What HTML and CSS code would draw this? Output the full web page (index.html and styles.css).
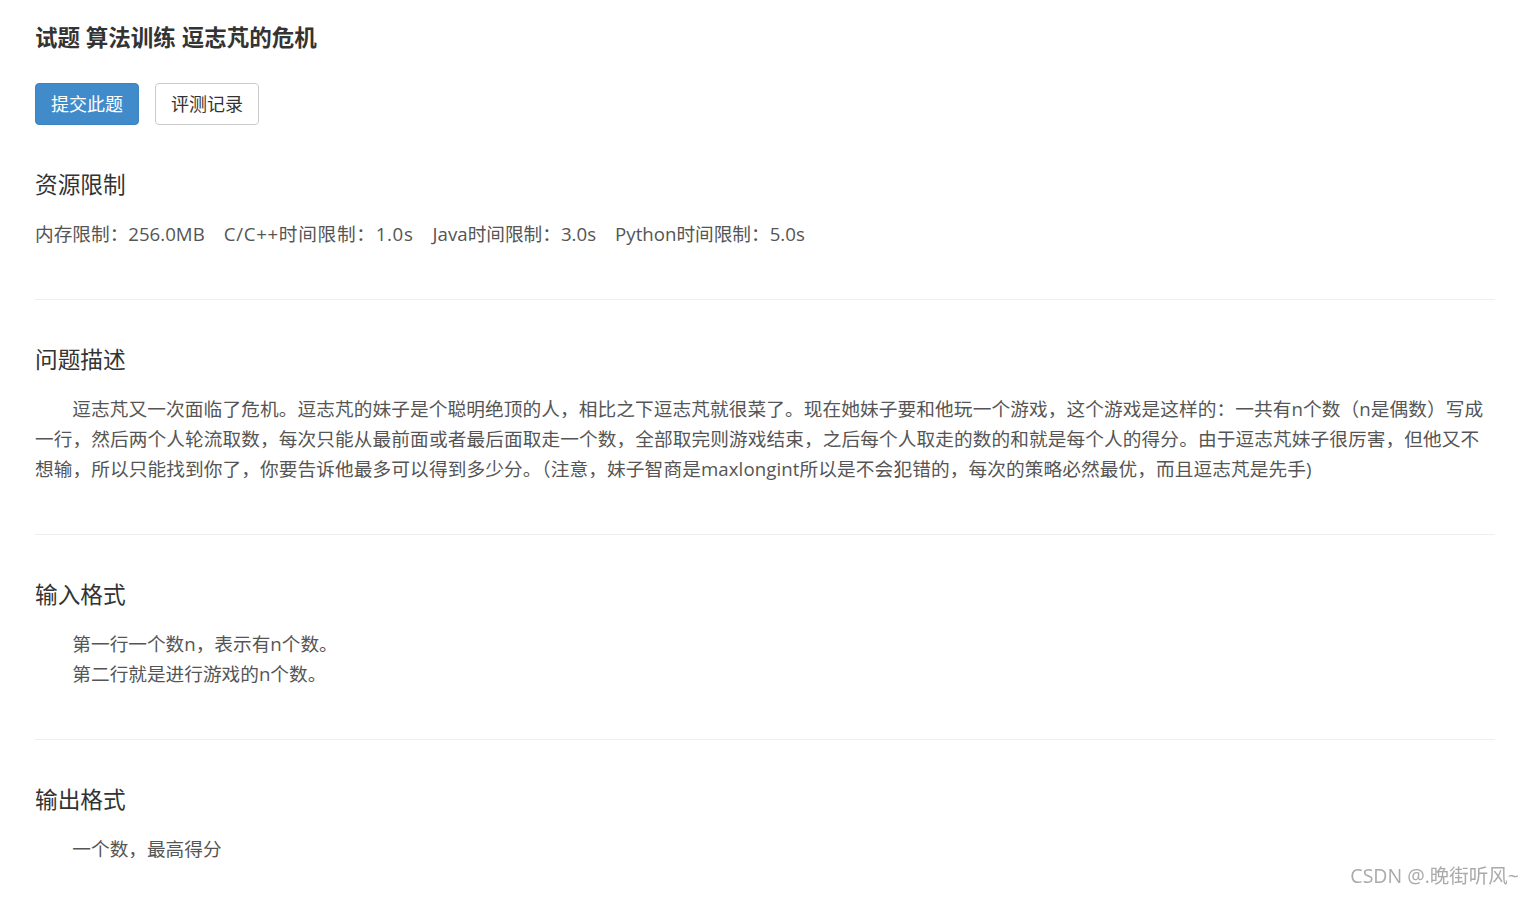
FILE: index.html
```html
<!DOCTYPE html>
<html lang="zh-CN">
<head>
    <meta charset="UTF-8">
    <meta name="viewport" content="width=device-width, initial-scale=1.0">
    <title>试题 算法训练 逗志芃的危机</title>
    <link rel="stylesheet" href="styles.css">
</head>
<body>
    <div class="page">
        <h1 class="title">试题 算法训练 逗志芃的危机</h1>

        <div class="actions">
            <a class="btn btn-primary" href="#">提交此题</a>
            <a class="btn btn-default" href="#">评测记录</a>
        </div>

        <div class="section">
            <h2>资源限制</h2>
            <p class="limits">
                <span class="limit">内存限制：256.0MB</span>
                <span class="limit">C/C++时间限制：1.0s</span>
                <span class="limit">Java时间限制：3.0s</span>
                <span class="limit">Python时间限制：5.0s</span>
            </p>
        </div>
        <hr>

        <div class="section">
            <h2>问题描述</h2>
            <p class="para">逗志芃又一次面临了危机。逗志芃的妹子是个聪明绝顶的人，相比之下逗志芃就很菜了。现在她妹子要和他玩一个游戏，这个游戏是这样的：一共有n个数（n是偶数）写成一行，然后两个人轮流取数，每次只能从最前面或者最后面取走一个数，全部取完则游戏结束，之后每个人取走的数的和就是每个人的得分。由于逗志芃妹子很厉害，但他又不想输，所以只能找到你了，你要告诉他最多可以得到多少分。（注意，妹子智商是maxlongint所以是不会犯错的，每次的策略必然最优，而且逗志芃是先手)</p>
        </div>
        <hr>

        <div class="section">
            <h2>输入格式</h2>
            <p class="text">第一行一个数n，表示有n个数。<br>第二行就是进行游戏的n个数。</p>
        </div>
        <hr>

        <div class="section">
            <h2>输出格式</h2>
            <p class="text">一个数，最高得分</p>
        </div>
    </div>

    <div class="watermark">CSDN @.晚街听风~</div>
</body>
</html>
```

FILE: styles.css
```css
body {
    margin: 0;
    padding: 0;
    background-color: #fff;
    font-family: "Open Sans", "Noto Sans CJK SC", sans-serif;
    color: #555;
    overflow: hidden;
}
.page {
    width: 1460px;
    padding: 23px 0 0 35px;
}
.title {
    margin: 0;
    font-size: 22.5px;
    line-height: 30px;
    font-weight: bold;
    color: #333;
}
.actions {
    display: flex;
    gap: 16px;
    margin-top: 30px;
}
.btn {
    display: inline-block;
    padding: 8px 15px;
    font-size: 18px;
    line-height: 24px;
    border: 1px solid transparent;
    border-radius: 4px;
    text-decoration: none;
}
.btn-primary {
    background-color: #428bca;
    border-color: #3c83c2;
    color: #fff;
}
.btn-default {
    background-color: #fff;
    border-color: #ccc;
    color: #333;
}
.section h2 {
    margin: 45px 0 0;
    font-size: 22.67px;
    line-height: 30px;
    font-weight: normal;
    color: #333;
}
.section p {
    margin: 19px 0 0;
    font-size: 18.67px;
    line-height: 30px;
    color: #555;
}
.limits {
    display: flex;
    gap: 19px;
}
.limit:nth-child(2) {
    letter-spacing: 0.7px;
}
.para {
    text-indent: 2em;
    letter-spacing: 0.1px;
}
.text {
    padding-left: 2em;
}
hr {
    margin: 50px 0 0;
    border: 0;
    border-top: 1px solid #eee;
}
.watermark {
    position: fixed;
    right: 14px;
    bottom: 8px;
    font-size: 19.5px;
    color: #aaa;
}
```
